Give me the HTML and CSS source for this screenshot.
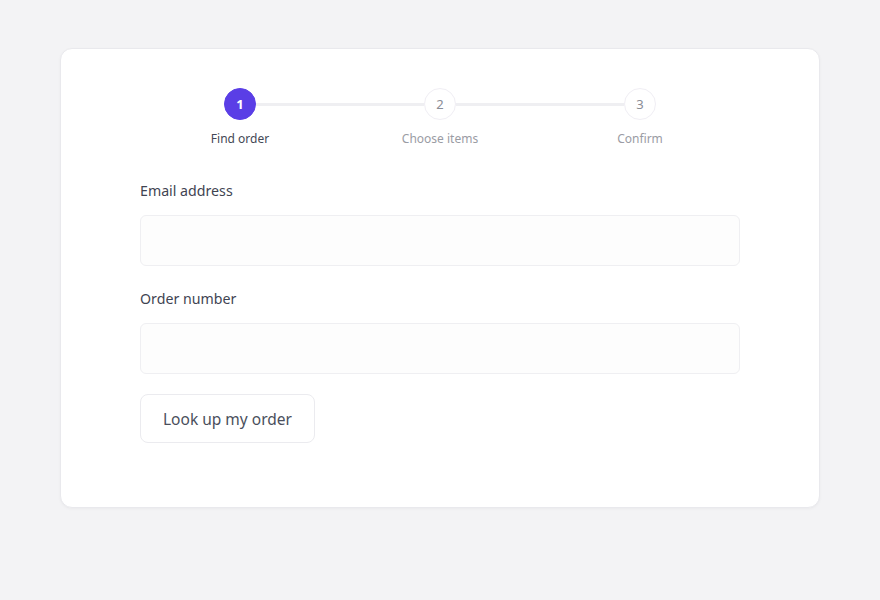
FILE: index.html
```html
<!DOCTYPE html>
<html lang="en">
<head>
  <meta charset="UTF-8">
  <meta name="viewport" content="width=device-width, initial-scale=1.0">
  <title>Find your order</title>
  <link rel="stylesheet" href="styles.css">
</head>
<body>
  <div class="card">
    <ol class="steps">
      <li class="step active">
        <span class="dot">1</span>
        <span class="step-label">Find order</span>
      </li>
      <li class="step">
        <span class="dot">2</span>
        <span class="step-label">Choose items</span>
      </li>
      <li class="step">
        <span class="dot">3</span>
        <span class="step-label">Confirm</span>
      </li>
    </ol>

    <form class="lookup">
      <div class="form-group">
        <label for="email">Email address</label>
        <input type="email" id="email" name="email">
      </div>
      <div class="form-group">
        <label for="order">Order number</label>
        <input type="text" id="order" name="order">
      </div>
      <button type="submit">Look up my order</button>
    </form>
  </div>
</body>
</html>
```

FILE: styles.css
```css
body {
  font-family: 'Noto Sans', 'Open Sans', sans-serif;
  background: #f3f3f5;
  color: #3f4452;
  margin: 0;
  padding: 48px 60px;
}

.card {
  background: #fff;
  border: 1px solid #e9e9ed;
  border-radius: 12px;
  box-shadow: 0 1px 3px rgba(0, 0, 0, 0.04);
  padding: 39px 79px 64px;
}

.steps {
  list-style: none;
  margin: 0;
  padding: 0;
  display: grid;
  grid-template-columns: repeat(3, 1fr);
}

.step {
  position: relative;
  display: flex;
  flex-direction: column;
  align-items: center;
  gap: 10px;
}

.step + .step::before {
  content: "";
  position: absolute;
  top: 15px;
  right: calc(50% + 16px);
  width: calc(100% - 32px);
  height: 3px;
  background: #efeff2;
}

.dot {
  width: 30px;
  height: 30px;
  border: 1px solid #f0eef4;
  border-radius: 50%;
  background: #fff;
  color: #8a8d96;
  font-size: 13px;
  display: flex;
  align-items: center;
  justify-content: center;
}

.step.active .dot {
  background: #5a3ee6;
  border-color: #5a3ee6;
  color: #fff;
  font-weight: bold;
}

.step-label {
  font-size: 12px;
  color: #9a9ca4;
}

.step.active .step-label {
  color: #444855;
}

.lookup {
  margin-top: 34px;
}

.form-group {
  margin-bottom: 23px;
}

label {
  display: block;
  font-size: 14.2px;
  color: #3f4452;
  margin-bottom: 15px;
}

input {
  display: block;
  box-sizing: border-box;
  width: 100%;
  height: 51px;
  border: 1px solid #efeff2;
  border-radius: 6px;
  background: #fdfdfd;
  outline: none;
  font-family: inherit;
  font-size: 15px;
}

button {
  margin-top: -3px;
  height: 49px;
  padding: 0 22px;
  border: 1px solid #ebebef;
  border-radius: 8px;
  background: #fff;
  color: #4a4f5c;
  font-family: inherit;
  font-size: 15.5px;
  cursor: pointer;
}
```
